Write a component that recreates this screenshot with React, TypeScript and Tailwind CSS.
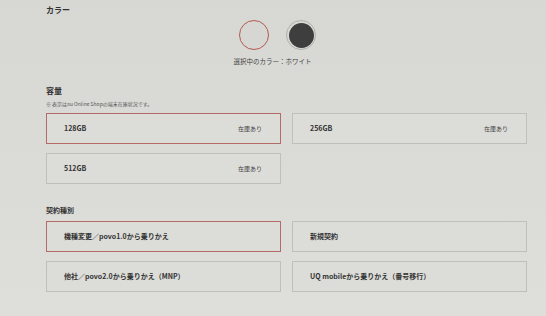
import React from 'react';

const font = { fontFamily: '"Noto Sans CJK JP", "Noto Sans", sans-serif' };

function Option({
  label,
  stock,
  selected,
}: {
  label: string;
  stock?: string;
  selected?: boolean;
}) {
  return (
    <div
      className={`flex h-[31px] items-center justify-between border bg-[#dcdcd8] pl-[17px] pr-[18px] ${
        selected ? 'border-[#b46a66]' : 'border-[#bfbfbb]'
      }`}
    >
      <span className="text-[7px] font-bold text-[#333]">{label}</span>
      {stock && <span className="text-[6px] text-[#444]">{stock}</span>}
    </div>
  );
}

export default function App() {
  return (
    <div
      className="h-[316px] w-[546px] overflow-hidden bg-gradient-to-b from-[#d7d7d3] to-[#dededa] text-[#333]"
      style={font}
    >
      <div className="ml-[46px] w-[481px] pt-[5px]">
        <div className="text-[8px] font-bold leading-[10px]">カラー</div>

        <div className="mt-[5px] flex justify-center gap-[17px] pr-[18px]">
          <div className="h-[30px] w-[30px] rounded-full border-[1.5px] border-[#b65a50] bg-[#d6d6d2]" />
          <div className="flex h-[30px] w-[30px] items-center justify-center rounded-full border border-[#b0b0ac]">
            <div className="h-[25px] w-[25px] rounded-full bg-[#3e3e3e]" />
          </div>
        </div>

        <div className="mt-[6px] pr-[28px] text-center text-[6.5px] leading-[10px] text-[#444]">
          選択中のカラー：ホワイト
        </div>

        <div className="mt-[20px] text-[8px] font-bold leading-[10px]">容量</div>
        <div className="mt-[4px] text-[5px] leading-[8px] text-[#555]">
          ※ 表示はau Online Shopの端末在庫状況です。
        </div>

        <div className="mt-[5px] grid grid-cols-2 gap-x-[11px] gap-y-[9px]">
          <Option label="128GB" stock="在庫あり" selected />
          <Option label="256GB" stock="在庫あり" />
          <Option label="512GB" stock="在庫あり" />
        </div>

        <div className="mt-[21px] text-[7px] font-bold leading-[10px]">契約種別</div>

        <div className="mt-[6px] grid grid-cols-2 gap-x-[11px] gap-y-[9px]">
          <Option label="機種変更／povo1.0から乗りかえ" selected />
          <Option label="新規契約" />
          <Option label="他社／povo2.0から乗りかえ（MNP）" />
          <Option label="UQ mobileから乗りかえ（番号移行）" />
        </div>
      </div>
    </div>
  );
}
